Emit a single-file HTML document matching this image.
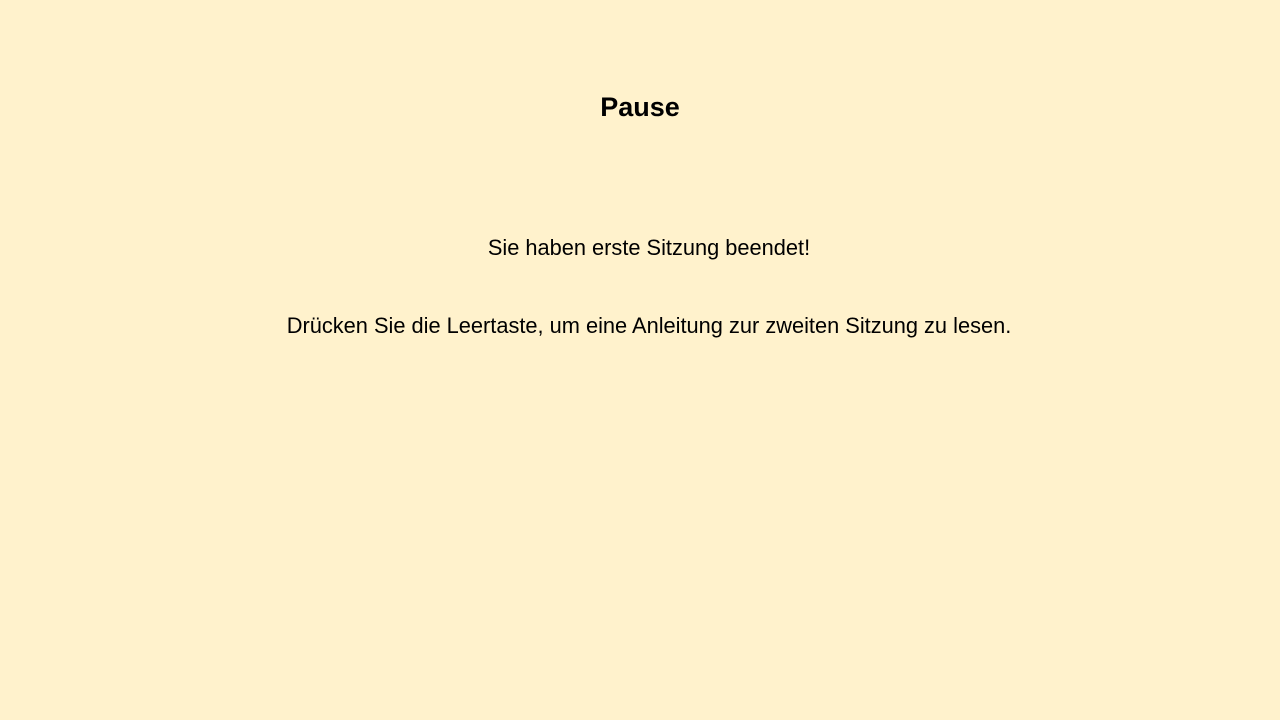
<!DOCTYPE html>
<html><head><meta charset="utf-8"><style>
html,body{margin:0;padding:0;width:1280px;height:720px;background:#FFF2CC;overflow:hidden}
body{font-family:"Liberation Sans",sans-serif;color:#000;position:relative}
.t{position:absolute;left:0;width:1280px;text-align:center;white-space:nowrap}
</style></head><body>
<div class="t" style="top:92px;font-size:27px;font-weight:bold;">Pause</div>
<div class="t" style="top:235px;left:9px;font-size:21.8px;">Sie haben erste Sitzung beendet!</div>
<div class="t" style="top:313px;left:9px;font-size:21.8px;">Drücken Sie die Leertaste, um eine Anleitung zur zweiten Sitzung zu lesen.</div>
</body></html>
